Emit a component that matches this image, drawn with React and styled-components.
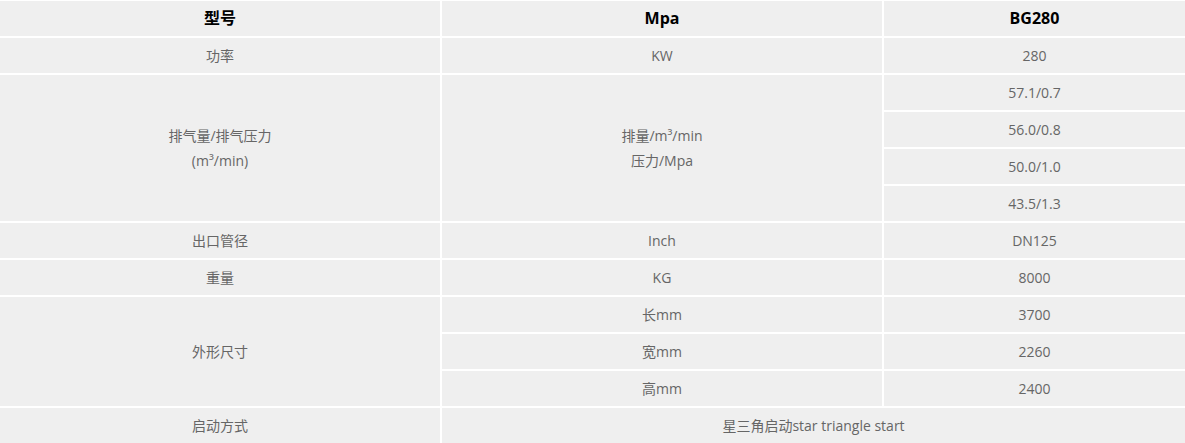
import styled, { createGlobalStyle } from 'styled-components'

const GlobalStyle = createGlobalStyle`
  html, body {
    margin: 0;
    padding: 0;
    background: #fff;
  }
  body {
    font-family: 'Open Sans', 'Noto Sans CJK SC', sans-serif;
  }
`

const Table = styled.div`
  display: grid;
  grid-template-columns: 440px 440px 1fr;
  grid-auto-rows: 35px;
  gap: 2px;
  padding-top: 1px;
  background: #fff;
  width: 1185px;
`

const Cell = styled.div`
  display: flex;
  flex-direction: column;
  align-items: center;
  justify-content: center;
  background: #efefef;
  color: ${(p) => (p.$head ? '#000' : '#666')};
  font-size: ${(p) => (p.$head ? '16px' : '14px')};
  font-weight: ${(p) => (p.$head ? 700 : 400)};
  line-height: 25px;
  text-align: center;
  grid-row: ${(p) => (p.$rows ? `span ${p.$rows}` : 'auto')};
  grid-column: ${(p) => (p.$cols ? `span ${p.$cols}` : 'auto')};
`

const App = () => {
  return (
    <>
      <GlobalStyle />
      <Table>
        <Cell $head>型号</Cell>
        <Cell $head>Mpa</Cell>
        <Cell $head>BG280</Cell>

        <Cell>功率</Cell>
        <Cell>KW</Cell>
        <Cell>280</Cell>

        <Cell $rows={4}>
          <span>排气量/排气压力</span>
          <span>(m³/min)</span>
        </Cell>
        <Cell $rows={4}>
          <span>排量/m³/min</span>
          <span>压力/Mpa</span>
        </Cell>
        <Cell>57.1/0.7</Cell>
        <Cell>56.0/0.8</Cell>
        <Cell>50.0/1.0</Cell>
        <Cell>43.5/1.3</Cell>

        <Cell>出口管径</Cell>
        <Cell>Inch</Cell>
        <Cell>DN125</Cell>

        <Cell>重量</Cell>
        <Cell>KG</Cell>
        <Cell>8000</Cell>

        <Cell $rows={3}>外形尺寸</Cell>
        <Cell>长mm</Cell>
        <Cell>3700</Cell>
        <Cell>宽mm</Cell>
        <Cell>2260</Cell>
        <Cell>高mm</Cell>
        <Cell>2400</Cell>

        <Cell>启动方式</Cell>
        <Cell $cols={2}>星三角启动star triangle start</Cell>
      </Table>
    </>
  )
}

export default App
